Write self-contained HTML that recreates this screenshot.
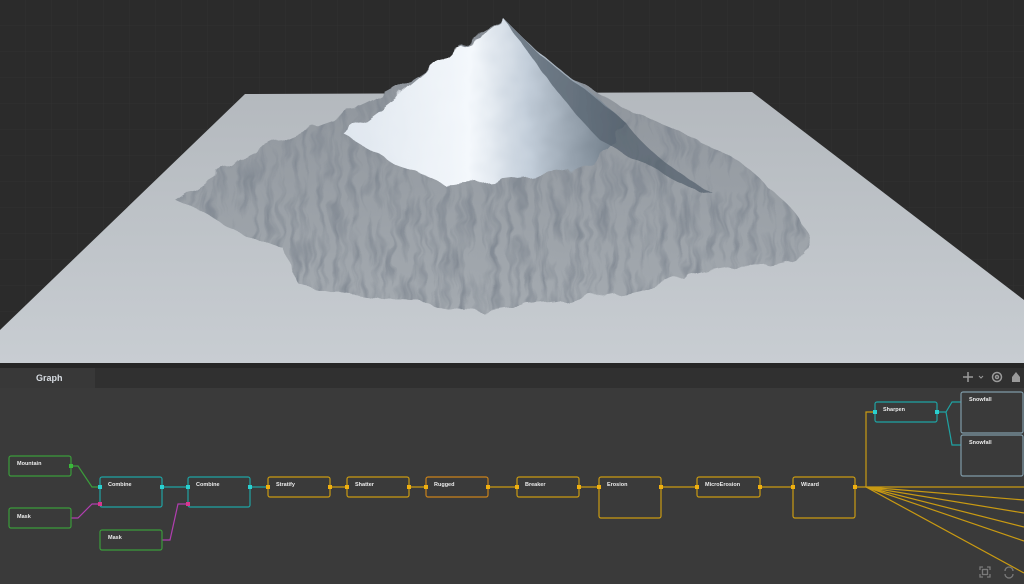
<!DOCTYPE html>
<html><head><meta charset="utf-8"><style>
html,body{margin:0;padding:0;background:#2b2b2b;width:1024px;height:584px;overflow:hidden;font-family:"Liberation Sans",sans-serif}
svg{display:block;position:absolute;left:0;top:0}
</style></head><body>
<svg width="1024" height="584" viewBox="0 0 1024 584">
<defs>
<pattern id="grid" width="26" height="26" patternUnits="userSpaceOnUse"><path d="M26 0V26H0" fill="none" stroke="#313131" stroke-width="1"/></pattern>
<linearGradient id="plane" x1="0" y1="0" x2="0" y2="1"><stop offset="0" stop-color="#b4b9be"/><stop offset="1" stop-color="#c8cdd2"/></linearGradient>
<linearGradient id="rock" x1="0" y1="0" x2="0" y2="1"><stop offset="0" stop-color="#8a9097"/><stop offset="1" stop-color="#a4aab0"/></linearGradient>
<linearGradient id="snow" x1="0" y1="0" x2="1" y2="0"><stop offset="0" stop-color="#dfe6ee"/><stop offset="0.45" stop-color="#f4f8fc"/><stop offset="0.65" stop-color="#c3ceda"/><stop offset="1" stop-color="#66737f"/></linearGradient>
<filter id="tex" x="0" y="0" width="1" height="1"><feTurbulence type="fractalNoise" baseFrequency="0.12 0.025" numOctaves="3" seed="4"/><feColorMatrix values="0 0 0 0 0.22  0 0 0 0 0.25  0 0 0 0 0.29  0 0 0 -2.6 1.5"/><feComposite in2="SourceGraphic" operator="in"/></filter>
<filter id="jag" x="-5%" y="-5%" width="110%" height="110%"><feTurbulence type="fractalNoise" baseFrequency="0.05" numOctaves="2" seed="2"/><feDisplacementMap in="SourceGraphic" scale="14"/></filter>
</defs>
<rect width="1024" height="363" fill="#2b2b2b"/>
<rect width="1024" height="363" fill="url(#grid)"/>
<polygon points="245,94 752,92 1024,300 1024,363 0,363 0,330" fill="url(#plane)"/>
<g filter="url(#jag)">
<path d="M175,200 C230,160 300,130 330,120 C370,105 420,80 460,45 L505,20 L540,55 C570,80 600,95 640,115 C690,140 740,150 770,190 C800,210 815,240 805,255 C790,260 770,270 740,265 C700,270 670,280 640,290 C600,300 560,300 520,305 C480,312 450,315 420,300 C380,300 340,295 300,285 C290,275 290,260 285,250 C250,240 220,220 175,200Z" fill="url(#rock)"/>
<path d="M175,200 C230,160 300,130 330,120 C370,105 420,80 460,45 L505,20 L540,55 C570,80 600,95 640,115 C690,140 740,150 770,190 C800,210 815,240 805,255 C790,260 770,270 740,265 C700,270 670,280 640,290 C600,300 560,300 520,305 C480,312 450,315 420,300 C380,300 340,295 300,285 C290,275 290,260 285,250 C250,240 220,220 175,200Z" fill="#000" filter="url(#tex)" opacity="0.9"/>
<path d="M345,135 C380,110 420,80 450,50 L480,38 L505,20 L520,35 C545,60 575,80 600,100 L625,122 C615,150 595,165 560,172 C520,178 480,183 445,185 C415,172 385,160 345,135Z" fill="url(#snow)"/>
<path d="M505,20 L540,55 C570,80 600,100 625,122 C645,150 680,175 715,195 L690,188 C650,168 620,150 600,140 C570,110 540,70 505,20Z" fill="#56616e" opacity="0.75"/>
</g>
<rect x="0" y="363" width="1024" height="221" fill="#3a3a3a"/>
<rect x="0" y="363" width="1024" height="5" fill="#262626"/>
<rect x="0" y="368" width="1024" height="20" fill="#303030"/>
<rect x="0" y="368" width="95" height="20" fill="#383838"/>
<text x="36" y="381" fill="#d8dde3" font-size="9" font-weight="bold">Graph</text>
<g stroke="#9a9a9a" stroke-width="1.5" fill="none">
<path d="M963,377h10M968,372v10"/><path d="M979,376l2,2 2,-2" stroke-width="1"/>
<circle cx="997" cy="377" r="4.5"/><circle cx="997" cy="377" r="1.5"/>
</g>
<path d="M1012,382v-5l4,-5 4,5v5z" fill="#9a9a9a"/>
<g stroke="#7a7a7a" stroke-width="1.3" fill="none"><path d="M980,570v-3h3M987,567h3v3M990,574v3h-3M983,577h-3v-3"/><rect x="982.5" y="569.5" width="5" height="5"/><path d="M1005,571a4,4 0 0 1 8,0M1013,574a4,4 0 0 1 -8,0"/></g>
<g fill="none" stroke-width="1.2">
<path d="M71,466 H78 L92,487 H100" stroke="#3b9c3b"/>
<path d="M71,518 H78 L92,504 H100" stroke="#b13eb0"/>
<path d="M162,540 H170 L178,504 H188" stroke="#b13eb0"/>
<path d="M162,487 H188" stroke="#1fa3a3"/>
<path d="M250,487 H268" stroke="#1fa3a3"/>
<g stroke="#c99a12"><path d="M330,487H347M409,487H426M488,487H517M579,487H599M661,487H697M760,487H793"/>
<path d="M855,487H866V412H875"/>
<path d="M866,487H1024M866,487L1024,500M866,487L1024,513M866,487L1024,527M866,487L1024,541M866,487L1024,573"/></g>
<path d="M937,412H946L952,402H961M946,412L952,445H961" stroke="#1fa3a3"/>
</g>
<g font-size="5.5" fill="#ececec" font-weight="bold" stroke-width="1.2">
<rect x="9" y="456" width="62" height="20" rx="2" fill="none" stroke="#3b9c3b"/><text x="17" y="465">Mountain</text>
<rect x="9" y="508" width="62" height="20" rx="2" fill="none" stroke="#3b9c3b"/><text x="17" y="518">Mask</text>
<rect x="100" y="530" width="62" height="20" rx="2" fill="none" stroke="#3b9c3b"/><text x="108" y="539">Mask</text>
<rect x="100" y="477" width="62" height="30" rx="2" fill="none" stroke="#1fa3a3"/><text x="108" y="486">Combine</text>
<rect x="188" y="477" width="62" height="30" rx="2" fill="none" stroke="#1fa3a3"/><text x="196" y="486">Combine</text>
<g stroke="#c99a12" fill="none">
<rect x="268" y="477" width="62" height="20" rx="2"/>
<rect x="347" y="477" width="62" height="20" rx="2"/>
<rect x="426" y="477" width="62" height="20" rx="2" stroke="#c9821a"/>
<rect x="517" y="477" width="62" height="20" rx="2"/>
<rect x="599" y="477" width="62" height="41" rx="2"/>
<rect x="697" y="477" width="63" height="20" rx="2"/>
<rect x="793" y="477" width="62" height="41" rx="2"/>
</g>
<text x="276" y="486">Stratify</text><text x="355" y="486">Shatter</text><text x="434" y="486">Rugged</text><text x="525" y="486">Breaker</text><text x="607" y="486">Erosion</text><text x="705" y="486">MicroErosion</text><text x="801" y="486">Wizard</text>
<rect x="875" y="402" width="62" height="20" rx="2" fill="none" stroke="#1fa3a3"/><text x="883" y="411">Sharpen</text>
<rect x="961" y="392" width="62" height="41" rx="2" fill="none" stroke="#7f9aa8"/><text x="969" y="401">Snowfall</text>
<rect x="961" y="435" width="62" height="41" rx="2" fill="none" stroke="#7f9aa8"/><text x="969" y="444">Snowfall</text>
</g>
<g fill="#2ad0d0"><rect x="98" y="485" width="4" height="4"/><rect x="160" y="485" width="4" height="4"/><rect x="186" y="485" width="4" height="4"/><rect x="248" y="485" width="4" height="4"/><rect x="873" y="410" width="4" height="4"/><rect x="935" y="410" width="4" height="4"/></g>
<g fill="#d8368f"><rect x="98" y="502" width="4" height="4"/><rect x="186" y="502" width="4" height="4"/></g>
<g fill="#3ab83a"><rect x="69" y="464" width="4" height="4"/></g>
<g fill="#f0b010"><rect x="266" y="485" width="4" height="4"/><rect x="328" y="485" width="4" height="4"/><rect x="345" y="485" width="4" height="4"/><rect x="407" y="485" width="4" height="4"/><rect x="424" y="485" width="4" height="4"/><rect x="486" y="485" width="4" height="4"/><rect x="515" y="485" width="4" height="4"/><rect x="577" y="485" width="4" height="4"/><rect x="597" y="485" width="4" height="4"/><rect x="659" y="485" width="4" height="4"/><rect x="695" y="485" width="4" height="4"/><rect x="758" y="485" width="4" height="4"/><rect x="791" y="485" width="4" height="4"/><rect x="853" y="485" width="4" height="4"/></g>
</svg>
</body></html>
